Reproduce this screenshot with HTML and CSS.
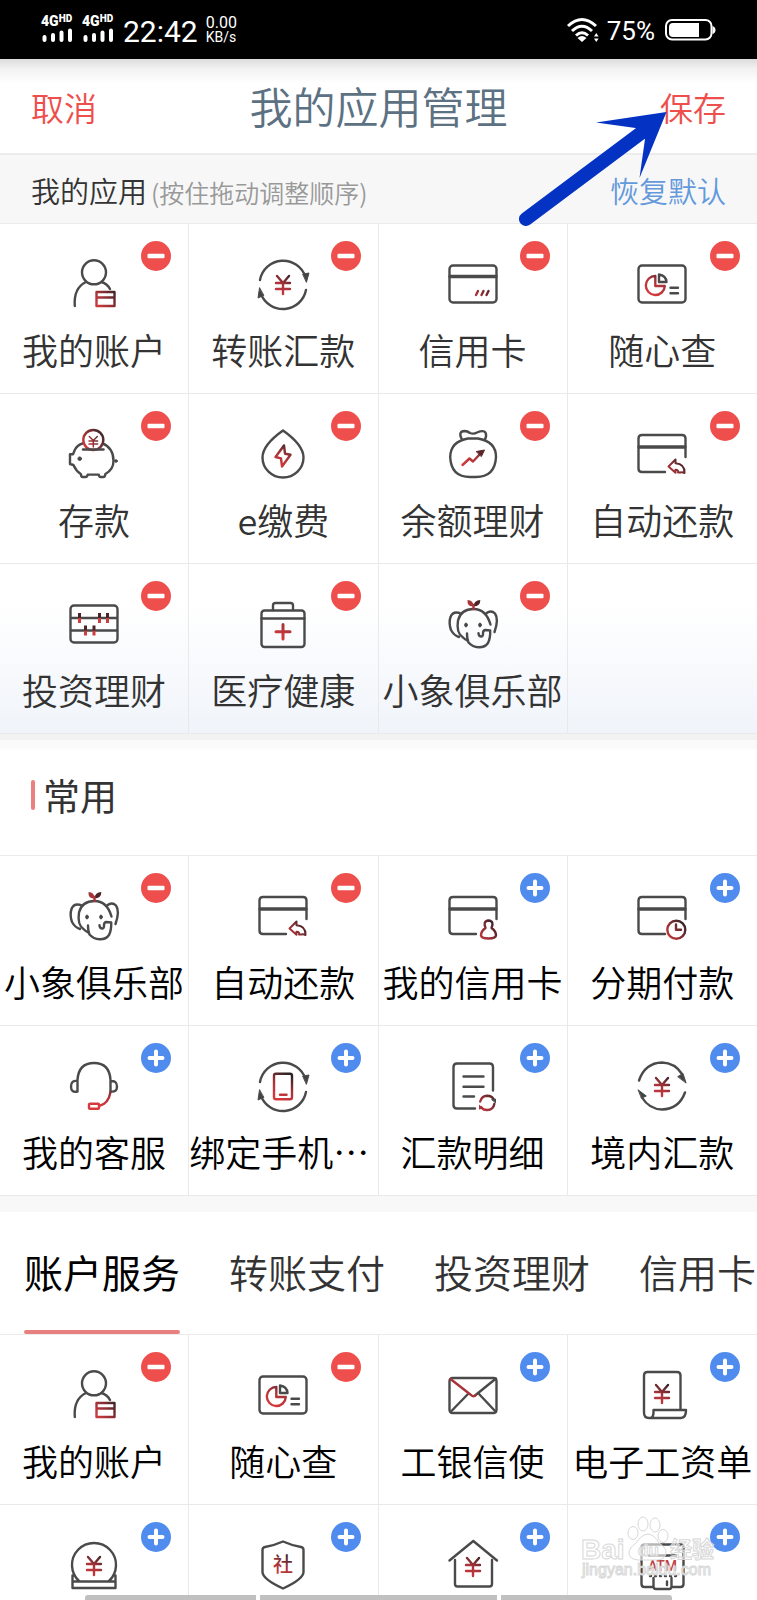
FILE: index.html
```html
<!DOCTYPE html>
<html lang="zh-CN">
<head>
  <meta charset="UTF-8">
  <meta name="viewport" content="width=device-width, initial-scale=1.0">
  <title>我的应用管理</title>
  <link rel="stylesheet" href="styles.css">
</head>
<body>

  <!-- icon sprite -->
  <svg class="sprite" aria-hidden="true">
    <defs>
      <linearGradient id="red" gradientUnits="userSpaceOnUse" x1="18" y1="38" x2="32" y2="14">
        <stop offset="0" stop-color="#d8393c"/>
        <stop offset="0.5" stop-color="#a8343a"/>
        <stop offset="1" stop-color="#2c2224"/>
      </linearGradient>
      <linearGradient id="redCorner" gradientUnits="userSpaceOnUse" x1="29" y1="46" x2="48" y2="31">
        <stop offset="0" stop-color="#c8393c"/>
        <stop offset="0.4" stop-color="#963036"/>
        <stop offset="1" stop-color="#2c2224"/>
      </linearGradient>
      <linearGradient id="redCoin" gradientUnits="userSpaceOnUse" x1="14" y1="18" x2="34" y2="4">
        <stop offset="0" stop-color="#d8393c"/>
        <stop offset="1" stop-color="#3a2a2c"/>
      </linearGradient>
    </defs>

    <symbol id="yen" viewBox="0 0 50 50">
      <path class="red" d="M19 17l6 7 6-7M18 24h14M18 30h14M25 24v11"/>
    </symbol>
    <symbol id="ring" viewBox="0 0 50 50">
      <path d="M2 21A23.5 23.5 0 0 1 47.500 18M48 31A23.500 23.500 0 0 1 3 35"/>
      <path class="solid" d="M45 15l6-1-2.500 9zM1.500 29L0 39l5.500-2.500z"/>
    </symbol>
    <symbol id="card-cut" viewBox="0 0 50 50">
      <path d="M28 43H5q-3.500 0-3.500-3.500V9.500Q1.500 6 5 6h40q3.500 0 3.500 3.500V28"/>
      <path class="band" d="M2 18h46"/>
    </symbol>

    <symbol id="user" viewBox="0 0 50 50">
      <circle cx="25" cy="13.300" r="12"/>
      <path d="M5.800 47Q4.500 29 17 23M32.500 23q6 2 8.500 7"/>
      <path class="red-corner" d="M27.500 33h18v14h-18zM27.500 38.500h18"/>
    </symbol>
    <symbol id="transfer" viewBox="0 0 50 50">
      <use href="#ring" width="50" height="50"/>
      <use href="#yen" width="50" height="50"/>
    </symbol>
    <symbol id="card" viewBox="0 0 50 50">
      <rect x="1.500" y="6.500" width="47" height="37" rx="3.500"/>
      <path class="band" d="M2 17.500h46"/>
      <path class="red-corner" d="M28 36l2-4M33.500 36l2-4M38.500 36l2-4"/>
    </symbol>
    <symbol id="query" viewBox="0 0 50 50">
      <rect x="1.500" y="6.500" width="47" height="37" rx="3.500"/>
      <path class="red" d="M18.300 17a9.500 9.500 0 1 0 9.500 10h-9.500z"/>
      <path d="M22 15.500V23h7.500Q29 16.500 22 15.500zM33.500 28.700h7.500M33.500 34.300h7.500"/>
    </symbol>
    <symbol id="pig" viewBox="0 0 50 50">
      <path d="M13.500 14.500Q8.500 16 6 20.500l-2 4.800H1V35l3.400 1q2.600 6 7.600 9.300 0 2.700 1.700 2.700h3q1.300 0 2-2.400h11q.6 2.400 1.700 2.400h3q1.600 0 2-3 8.100-4.600 8.100-13 0-13-11-17.600"/>
      <circle class="red-coin" cx="24.300" cy="11" r="10"/>
      <path d="M14 20.500h20.500" />
      <path class="red-coin" d="M20.300 7.500l4 4 4-4M20 12h8.600M20 15h8.600M24.300 11.500V18"/>
      <circle class="solid" cx="10.700" cy="29.700" r="1.800"/>
      <circle class="solid" cx="47" cy="32" r="1.300"/>
    </symbol>
    <symbol id="drop" viewBox="0 0 50 50">
      <path d="M25 1.500Q45.500 16 45.500 28.500a20.500 20 0 0 1-41 0Q4.500 16 25 1.500z"/>
      <path class="red" d="M26 16.500L17.500 28l5.500 1.300 1 8.200 8.500-11.800-5.500-1z"/>
    </symbol>
    <symbol id="bag" viewBox="0 0 50 50">
      <path d="M20 9.500h10q18 3 18 18.500Q47 48 28 48h-6Q3 48 2.200 28 2.500 12.500 20 9.500zM13.500 9.500q-3.500-7 3-7.500 3 0 5.500 2 3.500 1.500 7-.5 10-4 9 4l-1 3"/>
      <path class="red" d="M14.500 36l7-6.500 3.500 3 8-8.500"/>
      <path class="red-solid" d="M28.500 22.500l8-1.500-3 6.300z"/>
    </symbol>
    <symbol id="card-return" viewBox="0 0 50 50">
      <use href="#card-cut" width="50" height="50"/>
      <path class="red-corner thin" d="M31.500 37.500l7-7v3.700Q48 35 47.500 44q-2-1-4-.5h-2.500q1-2.500-2.500-2.700v3z"/>
    </symbol>
    <symbol id="abacus" viewBox="0 0 50 50">
      <rect x="1.500" y="6.500" width="47" height="37" rx="3.500"/>
      <path d="M2 19h46M2 31.500h46"/>
      <path class="bead" d="M10.500 19v5M30.500 19v5M38.500 19v5M16.500 31.500v5M25 31.500v5"/>
      <path class="bead-top" d="M10.500 14v5M30.500 14v5M38.500 14v5M16.500 26.500v5M25 26.500v5"/>
    </symbol>
    <symbol id="medkit" viewBox="0 0 50 50">
      <rect x="3.500" y="11.500" width="43" height="36.500" rx="3"/>
      <path d="M3.500 19.500h43M15 11V6.500q0-2.500 2.500-2.500h15Q35 4 35 6.500V11"/>
      <path class="red thick" d="M18 32.700h14M25 25.500V40"/>
    </symbol>
    <symbol id="elephant" viewBox="0 0 50 50">
      <path d="M42.500 25.500Q38 10 25.500 10 13 10 10 21.500 8 34 15 38.500q2.500 2.500 4.500 3M13 14.500Q5 11.500 2.500 18 .5 24 3 31q3 5.500 8 7M38 14.500q5-4 9 0 4 5.500-.5 18.500"/>
      <path d="M19 34.500q0 6 1.500 9 4 4.500 10 4.800 6.500.2 9.500-4.300 2.500-5 2.200-12.500l-5-.5q-2.500.5-2.200 4 0 3-2.500 2.300-1.800-.3-2-3"/>
      <ellipse class="solid" cx="18" cy="26" rx="1.300" ry="2"/>
      <ellipse class="solid" cx="32" cy="26" rx="1.300" ry="2"/>
      <path class="leaf" d="M25.500 7.500Q19 8 19.500 1q6 0 6 6.500z"/>
      <path class="leaf-dark" d="M25.500 7.500Q26 1 32.300 1 32.500 7 25.500 7.500z"/>
      <path class="leaf-stem" d="M25.500 6v4"/>
    </symbol>
    <symbol id="card-user" viewBox="0 0 50 50">
      <use href="#card-cut" width="50" height="50"/>
      <path class="red-corner" d="M37.500 37q-2.800-7 3-7.500 6 .5 3 7.500 4.500 3 4.500 7.500-.5 3-7.500 3t-7.500-3q0-4.500 4.500-7.500z"/>
    </symbol>
    <symbol id="card-clock" viewBox="0 0 50 50">
      <use href="#card-cut" width="50" height="50"/>
      <circle class="red-corner" cx="39.300" cy="38.700" r="9"/>
      <path class="red-corner" d="M39 33.500v5.200h5"/>
    </symbol>
    <symbol id="headset" viewBox="0 0 50 50">
      <path d="M8.500 30.500V19Q9.500 2 25 2t16.500 17v11.500M8.500 20Q2 19 2 25.500t6.500 5M41.500 20q6.500-.5 6.500 5.500t-6.500 5"/>
      <path class="red" d="M41.500 31Q39.500 43 30 45"/>
      <rect class="red" x="20" y="42.700" width="10" height="5" rx="1"/>
    </symbol>
    <symbol id="phone" viewBox="0 0 50 50">
      <use href="#ring" width="50" height="50"/>
      <rect class="red" x="16" y="12.700" width="18" height="25.600" rx="2"/>
      <path class="red" d="M22 33.700h6.500"/>
    </symbol>
    <symbol id="detail" viewBox="0 0 50 50">
      <path d="M27 47.500H9q-3.500 0-3.500-3.500V6Q5.500 2.500 9 2.500h32.500Q45 2.500 45 6v23.500M15.500 15.500h20M15.500 25.700h20M15.500 35.500H26"/>
      <path class="red-corner" d="M32.200 40.500q1.500-5.500 7-5.700 4.500 0 6.300 3.200M46.300 43q-1 5.800-7 6-4 .2-6.300-3"/>
      <path class="solid" d="M44 38.500l3.500-.5v3.500z"/>
      <path class="leaf" d="M31 48.500V43.500l4 4z"/>
    </symbol>
    <symbol id="domestic" viewBox="0 0 50 50">
      <path d="M2 19.500Q8 2 25 1.500 38 2 45 13M48 31.500Q42 48 25 48.500 12 48 5 36.500"/>
      <path class="solid" d="M41 15.500l5-3 3 9.200zM1.300 29l8 6-4.500 2z"/>
      <use href="#yen" width="50" height="50"/>
    </symbol>
    <symbol id="mail" viewBox="0 0 50 50">
      <rect x="1.500" y="8" width="47" height="35" rx="3"/>
      <path d="M27 25.500L48 8.500M20 24L2.500 42M31 24l17 18"/>
      <path class="leaf-stem" d="M2.500 9L23 25q2.500 2.500 5 0"/>
    </symbol>
    <symbol id="payroll" viewBox="0 0 50 50">
      <path d="M43.500 40V5.500Q43.500 2 40 2H10.500Q7 2 7 5.500v37Q7 48 12 48h32q5 0 5-8H16.500q.5 8-3.500 8"/>
      <path class="red" d="M19 15l6 7 6-7M18 22h14M18 28h14M25 22v11"/>
    </symbol>
    <symbol id="deposit" viewBox="0 0 50 50">
      <path d="M10.500 41.500a22 22 0 1 1 29 0M6 35.500H3.500V48h43V35.500H44M3.500 41.500h43"/>
      <use href="#yen" width="50" height="50"/>
    </symbol>
    <symbol id="house" viewBox="0 0 50 50">
      <path d="M1.500 20.500L25.300 1 49 20.500M7 20v24q0 2.500 2.500 2.500h32Q44 46.500 44 44V20"/>
      <use href="#yen" width="50" height="50" y="1"/>
    </symbol>

    <symbol id="minus" viewBox="0 0 30 30">
      <circle cx="15" cy="15" r="15" fill="#ee4f4c"/>
      <rect x="6.500" y="12.800" width="17" height="4.400" rx="1" fill="#fff"/>
    </symbol>
    <symbol id="plus" viewBox="0 0 30 30">
      <circle cx="15" cy="15" r="15" fill="#508bee"/>
      <path d="M15 8.500v13M8.500 15h13" fill="none" stroke="#fff" stroke-width="4" stroke-linecap="round"/>
    </symbol>
  </svg>

  <div class="status">
    <div class="signal">
      <span>4G<small>HD</small></span>
      <svg width="32" height="14" viewBox="0 0 32 14"><path d="M3.500 9v3M12 7v5M20.500 4.500V12M29 2.500V12"/></svg>
    </div>
    <div class="signal">
      <span>4G<small>HD</small></span>
      <svg width="32" height="14" viewBox="0 0 32 14"><path d="M3.500 9v3M12 7v5M20.500 4.500V12M29 2.500V12"/></svg>
    </div>
    <div class="clock">22:42</div>
    <div class="speed"><span>0.00</span><span class="unit">KB/s</span></div>
    <svg class="wifi" width="34" height="26" viewBox="0 0 34 26">
      <path d="M2 9q14-13 28 0M6 14q10-9.500 20 0M10 18.500q6-5.500 12 0"/>
      <path class="fill" d="M11.500 21q4.500-4 9 0L16 25zM28 19.500l2.300-3.500 2.300 3.500zM28 21.500l2.300 3.500 2.300-3.500z"/>
    </svg>
    <div class="percent">75%</div>
    <svg class="battery" width="51" height="22" viewBox="0 0 51 22">
      <rect x="1" y="1" width="45.500" height="19.500" rx="6"/>
      <path class="fill" d="M8 4h26v14H8q-4 0-4-4V8q0-4 4-4zM47.500 7q3 1 3 4t-3 4z"/>
    </svg>
  </div>

  <header class="header">
    <button class="link">取消</button>
    <h1>我的应用管理</h1>
    <button class="link save">保存</button>
    <svg class="pointer" width="150" height="116" viewBox="0 0 150 116">
      <path class="head" d="M147.500 0L77 10.500 116.500 16l9.500 11-5.500 39z"/>
      <path class="tail" d="M7 107L122 21"/>
    </svg>
  </header>

  <section>
    <div class="bar">
      <h2>我的应用</h2>
      <span class="hint">(按住拖动调整顺序)</span>
      <button class="reset">恢复默认</button>
    </div>
    <ul class="grid mine">
      <li class="cell"><svg class="icon"><use href="#user"/></svg><span class="name">我的账户</span><button class="badge" aria-label="移除"><svg><use href="#minus"/></svg></button></li>
      <li class="cell"><svg class="icon"><use href="#transfer"/></svg><span class="name">转账汇款</span><button class="badge" aria-label="移除"><svg><use href="#minus"/></svg></button></li>
      <li class="cell"><svg class="icon"><use href="#card"/></svg><span class="name">信用卡</span><button class="badge" aria-label="移除"><svg><use href="#minus"/></svg></button></li>
      <li class="cell"><svg class="icon"><use href="#query"/></svg><span class="name">随心查</span><button class="badge" aria-label="移除"><svg><use href="#minus"/></svg></button></li>
      <li class="cell"><svg class="icon"><use href="#pig"/></svg><span class="name">存款</span><button class="badge" aria-label="移除"><svg><use href="#minus"/></svg></button></li>
      <li class="cell"><svg class="icon"><use href="#drop"/></svg><span class="name">e缴费</span><button class="badge" aria-label="移除"><svg><use href="#minus"/></svg></button></li>
      <li class="cell"><svg class="icon"><use href="#bag"/></svg><span class="name">余额理财</span><button class="badge" aria-label="移除"><svg><use href="#minus"/></svg></button></li>
      <li class="cell"><svg class="icon"><use href="#card-return"/></svg><span class="name">自动还款</span><button class="badge" aria-label="移除"><svg><use href="#minus"/></svg></button></li>
      <li class="cell"><svg class="icon"><use href="#abacus"/></svg><span class="name">投资理财</span><button class="badge" aria-label="移除"><svg><use href="#minus"/></svg></button></li>
      <li class="cell"><svg class="icon"><use href="#medkit"/></svg><span class="name">医疗健康</span><button class="badge" aria-label="移除"><svg><use href="#minus"/></svg></button></li>
      <li class="cell"><svg class="icon"><use href="#elephant"/></svg><span class="name">小象俱乐部</span><button class="badge" aria-label="移除"><svg><use href="#minus"/></svg></button></li>
      <li class="cell"></li>
    </ul>
  </section>

  <section class="common">
    <h2 class="title">常用</h2>
    <ul class="grid">
      <li class="cell"><svg class="icon"><use href="#elephant"/></svg><span class="name">小象俱乐部</span><button class="badge" aria-label="移除"><svg><use href="#minus"/></svg></button></li>
      <li class="cell"><svg class="icon"><use href="#card-return"/></svg><span class="name">自动还款</span><button class="badge" aria-label="移除"><svg><use href="#minus"/></svg></button></li>
      <li class="cell"><svg class="icon"><use href="#card-user"/></svg><span class="name">我的信用卡</span><button class="badge" aria-label="添加"><svg><use href="#plus"/></svg></button></li>
      <li class="cell"><svg class="icon"><use href="#card-clock"/></svg><span class="name">分期付款</span><button class="badge" aria-label="添加"><svg><use href="#plus"/></svg></button></li>
      <li class="cell"><svg class="icon"><use href="#headset"/></svg><span class="name">我的客服</span><button class="badge" aria-label="添加"><svg><use href="#plus"/></svg></button></li>
      <li class="cell"><svg class="icon"><use href="#phone"/></svg><span class="name long">绑定手机…</span><button class="badge" aria-label="添加"><svg><use href="#plus"/></svg></button></li>
      <li class="cell"><svg class="icon"><use href="#detail"/></svg><span class="name">汇款明细</span><button class="badge" aria-label="添加"><svg><use href="#plus"/></svg></button></li>
      <li class="cell"><svg class="icon"><use href="#domestic"/></svg><span class="name">境内汇款</span><button class="badge" aria-label="添加"><svg><use href="#plus"/></svg></button></li>
    </ul>
  </section>

  <section class="services">
    <nav class="tabs">
      <button class="tab active">账户服务</button>
      <button class="tab">转账支付</button>
      <button class="tab">投资理财</button>
      <button class="tab">信用卡</button>
    </nav>
    <ul class="grid">
      <li class="cell"><svg class="icon"><use href="#user"/></svg><span class="name">我的账户</span><button class="badge" aria-label="移除"><svg><use href="#minus"/></svg></button></li>
      <li class="cell"><svg class="icon"><use href="#query"/></svg><span class="name">随心查</span><button class="badge" aria-label="移除"><svg><use href="#minus"/></svg></button></li>
      <li class="cell"><svg class="icon"><use href="#mail"/></svg><span class="name">工银信使</span><button class="badge" aria-label="添加"><svg><use href="#plus"/></svg></button></li>
      <li class="cell"><svg class="icon"><use href="#payroll"/></svg><span class="name">电子工资单</span><button class="badge" aria-label="添加"><svg><use href="#plus"/></svg></button></li>
      <li class="cell"><svg class="icon"><use href="#deposit"/></svg><button class="badge" aria-label="添加"><svg><use href="#plus"/></svg></button></li>
      <li class="cell">
        <svg class="icon" viewBox="0 0 50 50">
          <path d="M25 1.500Q34 5.500 43 7q2.500.5 2.500 3v22Q45.500 39 25 48.500 4.500 39 4.500 32V10q0-2.500 2.500-3 9-1.500 18-5.500z"/>
          <text class="shield-text" x="25" y="32">社</text>
        </svg>
        <button class="badge" aria-label="添加"><svg><use href="#plus"/></svg></button>
      </li>
      <li class="cell"><svg class="icon"><use href="#house"/></svg><button class="badge" aria-label="添加"><svg><use href="#plus"/></svg></button></li>
      <li class="cell">
        <svg class="icon" viewBox="0 0 50 50">
          <path d="M16 47H7.500q-3 0-3-3V7.500q0-3 3-3h36q3 0 3 3V44q0 3-3 3H35M12 15.500h27M16.500 38v8.500q0 2.500 2.500 2.500h13q2.500 0 2.500-2.500V38M30 41.500v3.500"/>
          <path class="dash" d="M13 36h26"/>
          <text class="atm-text" x="25.500" y="31">ATM</text>
        </svg>
        <button class="badge" aria-label="添加"><svg><use href="#plus"/></svg></button>
      </li>
    </ul>
  </section>

  <svg class="watermark" width="140" height="70" viewBox="0 0 140 70">
    <text class="brand" x="0" y="45">Bai</text>
    <ellipse cx="52" cy="19" rx="5" ry="6.500"/>
    <ellipse cx="62" cy="10" rx="5" ry="7"/>
    <ellipse cx="74" cy="11" rx="5" ry="7"/>
    <ellipse cx="82" cy="22" rx="5" ry="6.500"/>
    <path d="M67 20q7 1 11 9 8 5 7 11-2 6-9 6H57q-9-1-9-7 0-5 7-10 5-8 12-9z"/>
    <text class="brand du" x="57" y="42">du</text>
    <text class="brand cn" x="89" y="43">经验</text>
    <text class="url" x="1" y="61">jingyan.baidu.com</text>
  </svg>

  <div class="nav-hint"><span></span><span></span><span></span></div>

</body>
</html>
```

FILE: styles.css
```css
* {
  box-sizing: border-box;
}
body {
  margin: 0;
  height: 100vh;
  display: flex;
  flex-direction: column;
  position: relative;
  overflow: hidden;
  background: #fff;
  color: #333;
  font-family: "Noto Sans CJK SC", sans-serif;
  font-weight: 350;
}
h1, h2, ul {
  margin: 0;
  padding: 0;
  font-weight: 350;
}
ul {
  list-style: none;
}
button {
  padding: 0;
  border: none;
  background: none;
  font: inherit;
  cursor: pointer;
}
.sprite {
  position: absolute;
  width: 0;
  height: 0;
}

/* status bar */
.status {
  flex: none;
  display: flex;
  align-items: center;
  height: 59px;
  padding: 0 41px;
  background: #000;
  color: #fff;
  font-family: Roboto, sans-serif;
  font-weight: 400;
}
.signal {
  display: flex;
  flex-direction: column;
  width: 32px;
  margin-right: 9px;
  padding-bottom: 3px;
  font-size: 14px;
  font-weight: 900;
  line-height: 14px;
  white-space: nowrap;
}
.signal span {
  display: flex;
}
.signal small {
  font-size: 10px;
  line-height: 10px;
}
.signal path {
  stroke: #fff;
  stroke-width: 4;
  stroke-linecap: round;
}
.clock {
  margin-right: 8px;
  padding-top: 3px;
  font-size: 30px;
}
.speed {
  display: flex;
  flex-direction: column;
  margin-right: auto;
  font-size: 16px;
  line-height: 14px;
}
.unit {
  font-size: 14px;
}
.wifi {
  margin-right: 7px;
  fill: none;
  stroke: #fff;
  stroke-width: 3;
}
.percent {
  margin-right: 10px;
  padding-top: 2px;
  font-size: 26px;
}
.battery {
  fill: none;
  stroke: #fff;
  stroke-width: 2;
}
.status .fill {
  fill: #fff;
  stroke: none;
}

/* header */
.header {
  flex: none;
  position: relative;
  display: flex;
  align-items: center;
  justify-content: space-between;
  height: 96px;
  padding: 0 31px 2px;
  border-bottom: 2px solid #ececec;
  background: linear-gradient(#dcdcdc, #f2f2f2 10px, #fff 24px);
}
.header h1 {
  color: #5c7182;
  font-size: 43px;
  line-height: 60px;
}
.link {
  padding-top: 4px;
  color: #ee4f4c;
  font-size: 33px;
  line-height: 40px;
}
.pointer {
  position: absolute;
  top: 53px;
  right: 88px;
  z-index: 2;
  pointer-events: none;
}
.pointer .head {
  fill: #0433c4;
}
.pointer .tail {
  stroke: #0433c4;
  stroke-width: 14;
  stroke-linecap: round;
}

/* my apps */
.bar {
  display: flex;
  align-items: center;
  height: 68px;
  padding: 1px 31px 0;
  background: #f7f7f7;
}
.bar h2 {
  font-size: 29px;
  line-height: 40px;
}
.hint {
  margin-left: 4px;
  padding-top: 4px;
  color: #999;
  font-size: 25px;
  line-height: 40px;
}
.reset {
  margin-left: auto;
  color: #6499dc;
  font-size: 29px;
  line-height: 40px;
}
.grid {
  display: grid;
  grid-template-columns: repeat(4, 1fr);
  border-top: 1px solid #ebebeb;
}
.mine {
  background: linear-gradient(to top, #f0f4fa, #fff 130px);
}
.cell {
  position: relative;
  display: flex;
  flex-direction: column;
  align-items: center;
  padding: 35px 0 22px;
  border-right: 1px solid #e9e9e9;
  border-bottom: 1px solid #e9e9e9;
}
.cell:nth-child(4n) {
  border-right: none;
}
.icon {
  width: 50px;
  height: 50px;
  overflow: visible;
  fill: none;
  stroke: #4a4a4a;
  stroke-width: 2.4;
  stroke-linecap: round;
  stroke-linejoin: round;
}
.name {
  margin-top: 18px;
  font-size: 36px;
  line-height: 44px;
  white-space: nowrap;
}
.long {
  align-self: flex-start;
}
.badge {
  position: absolute;
  top: 17px;
  right: 17px;
  width: 30px;
  height: 30px;
}
.badge svg {
  display: block;
  width: 30px;
  height: 30px;
}

/* icon parts */
symbol {
  overflow: visible;
}
.band {
  stroke-width: 3.4;
}
.red {
  stroke: url(#red);
}
.thick {
  stroke-width: 3;
}
.red-corner {
  stroke: url(#redCorner);
}
.thin {
  stroke-width: 2;
}
.red-coin {
  stroke: url(#redCoin);
  fill: #fff;
}
path.red-coin {
  fill: none;
  stroke-width: 1.5;
}
.solid {
  fill: #444;
  stroke-width: 1;
}
.red-solid {
  fill: #5a2529;
  stroke: #5a2529;
  stroke-width: 1;
}
.bead, .bead-top {
  stroke: #cf3f42;
  stroke-width: 3;
  stroke-linecap: butt;
}
.bead-top {
  stroke: #4a2427;
}
.leaf {
  fill: #a8343a;
  stroke: none;
}
.leaf-dark {
  fill: #4a2427;
  stroke: none;
}
.leaf-stem {
  stroke: #a8343a;
}
.dash {
  stroke-dasharray: 1 4;
}
.shield-text {
  fill: url(#red);
  stroke: none;
  font-size: 20px;
  font-weight: 500;
  text-anchor: middle;
}
.atm-text {
  fill: #bd4145;
  stroke: none;
  font-family: Roboto, sans-serif;
  font-size: 14px;
  font-weight: 500;
  text-anchor: middle;
}

/* common apps */
.common {
  padding-top: 16px;
  background: linear-gradient(#f2f2f2 6px, #fafafa 6px, #fafafa 14px, #fff 16px);
  color: #000;
}
.title {
  display: flex;
  align-items: center;
  gap: 8px;
  height: 105px;
  padding: 0 31px 16px;
  color: #333;
  font-size: 37px;
  font-weight: 400;
}
.title::before {
  content: "";
  width: 4px;
  height: 30px;
  border-radius: 2px;
  background: #ea8080;
}

/* service tabs */
.services {
  flex: 1;
  display: flex;
  flex-direction: column;
  border-top: 16px solid #f8f8f8;
  color: #000;
}
.tabs {
  display: flex;
  gap: 49px;
  height: 122px;
  padding-left: 24px;
  overflow: hidden;
}
.tab {
  flex: none;
  border-bottom: 4px solid transparent;
  color: #333;
  font-size: 39px;
  line-height: 56px;
}
.active {
  position: relative;
  color: #000;
  font-weight: 400;
}
.active::after {
  content: "";
  position: absolute;
  left: 0;
  right: 0;
  bottom: -4px;
  height: 4px;
  border-radius: 2px;
  background: #e88080;
}
.services .grid {
  flex: 1;
  grid-template-rows: auto 1fr;
}

/* overlays */
.watermark {
  position: absolute;
  right: 36px;
  bottom: 16px;
  fill: #fff;
  fill-opacity: 0.6;
  stroke: #d8d8d8;
  stroke-width: 1;
  pointer-events: none;
}
.brand {
  font-family: "Liberation Sans", sans-serif;
  font-size: 28px;
  font-weight: 700;
}
.du {
  font-size: 17px;
}
.cn {
  font-family: "Noto Sans CJK SC", sans-serif;
  font-size: 22px;
}
.url {
  font-family: "Liberation Sans", sans-serif;
  font-size: 16px;
  font-weight: 400;
}
.nav-hint {
  position: absolute;
  left: 0;
  right: 0;
  bottom: 0;
  display: flex;
  justify-content: center;
  gap: 4px;
}
.nav-hint span {
  width: 171px;
  height: 5px;
  border-radius: 3px 0 0 0;
  background: #c0c0c0;
}
.nav-hint span:nth-child(2) {
  width: 237px;
  border-radius: 0;
}
.nav-hint span:nth-child(3) {
  border-radius: 0 3px 0 0;
}
```
